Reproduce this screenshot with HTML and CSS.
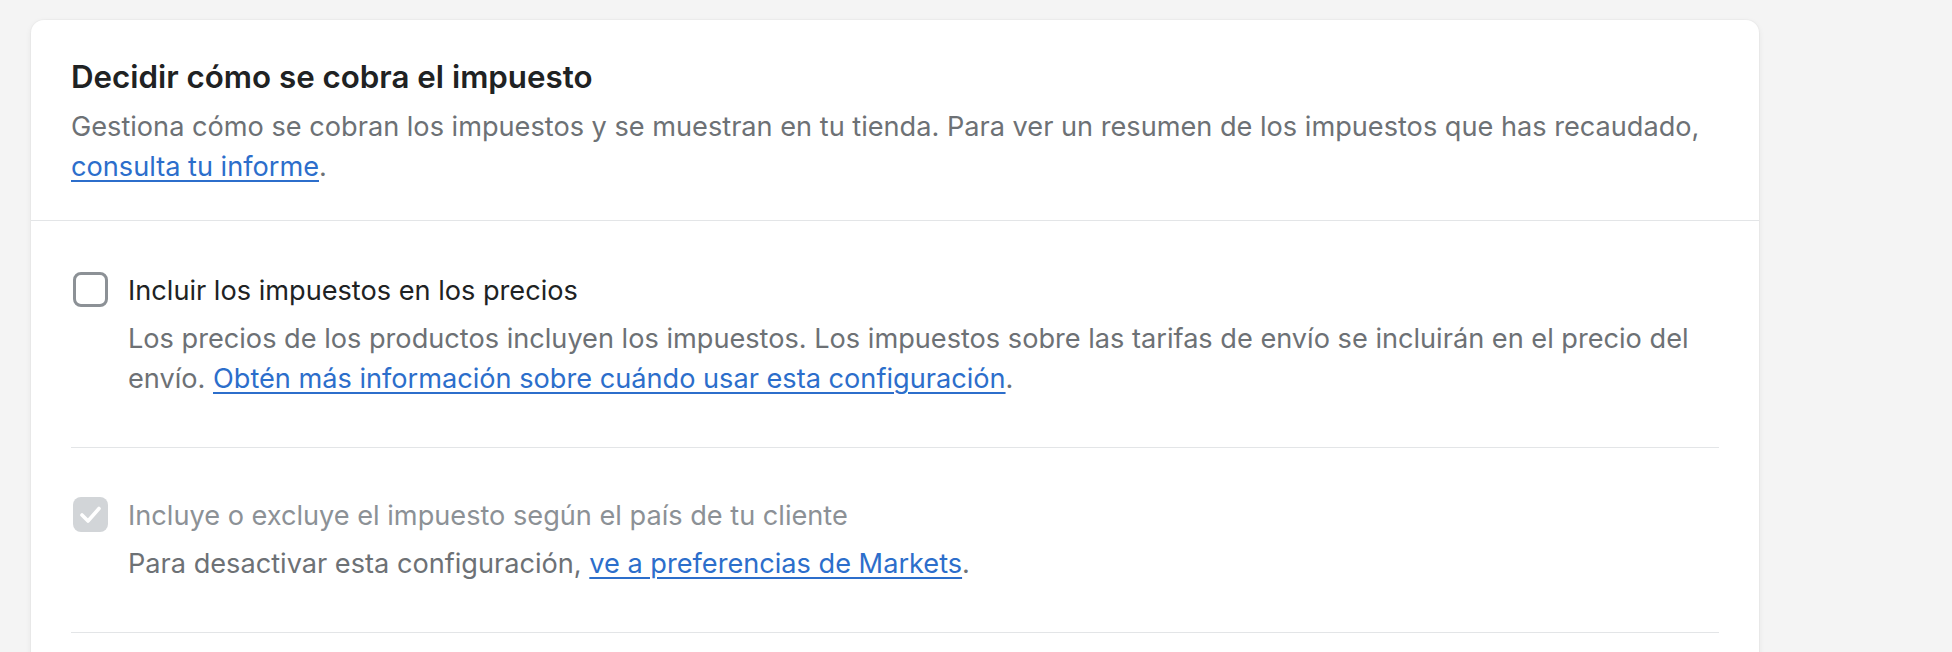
FILE: index.html
```html
<!DOCTYPE html>
<html lang="es">
<head>
    <meta charset="UTF-8">
    <meta name="viewport" content="width=device-width, initial-scale=1.0">
    <title>Impuestos</title>
    <link rel="stylesheet" href="styles.css">
</head>
<body>
    <div class="page">
        <div class="card">
            <div class="card-header">
                <h2>Decidir cómo se cobra el impuesto</h2>
                <p class="muted">Gestiona cómo se cobran los impuestos y se muestran en tu tienda. Para ver un resumen de los impuestos que has recaudado, <a href="#">consulta tu informe</a>.</p>
            </div>
            <div class="card-body">
                <div class="option">
                    <label class="option-row">
                        <span class="checkbox"></span>
                        <span class="option-label">Incluir los impuestos en los precios</span>
                    </label>
                    <p class="muted option-help">Los precios de los productos incluyen los impuestos. Los impuestos sobre las tarifas de envío se incluirán en el precio del envío. <a href="#">Obtén más información sobre cuándo usar esta configuración</a>.</p>
                </div>
                <div class="option">
                    <label class="option-row disabled">
                        <span class="checkbox checked">
                            <svg viewBox="0 0 35 35"><path d="M9 18l6 6 11-12.5" fill="none" stroke="#fff" stroke-width="3.6" stroke-linecap="round" stroke-linejoin="round"/></svg>
                        </span>
                        <span class="option-label">Incluye o excluye el impuesto según el país de tu cliente</span>
                    </label>
                    <p class="muted option-help">Para desactivar esta configuración, <a href="#">ve a preferencias de Markets</a>.</p>
                </div>
                <div class="option">
                    <p class="muted option-help">&nbsp;</p>
                </div>
            </div>
        </div>
    </div>
</body>
</html>
```

FILE: styles.css
```css
body {
    margin: 0;
    background-color: #f4f4f4;
    font-family: Inter, "Noto Sans", sans-serif;
    color: #202223;
    overflow: hidden;
}
.page {
    padding: 20px 193px 40px 31px;
}
.card {
    background-color: #fff;
    border-radius: 13px;
    box-shadow: 0 0 0 1px rgba(0, 0, 0, 0.02), 0 2px 6px rgba(0, 0, 0, 0.07);
}
.card-header {
    padding: 37px 40px 33px;
    border-bottom: 1px solid #e3e5e7;
}
h2 {
    margin: 0 0 10px;
    font-size: 31.3px;
    line-height: 40px;
    font-weight: 600;
    color: #202223;
}
p {
    margin: 0;
}
.muted {
    font-size: 27.15px;
    line-height: 40px;
    color: #6d7175;
}
a {
    color: #2c6ecb;
    text-decoration: underline;
    text-underline-offset: 4px;
    text-decoration-thickness: 2px;
}
.card-body {
    padding: 2px 40px 0;
}
.option {
    padding: 48px 0;
    border-bottom: 1px solid #e3e5e7;
}
.option-row {
    display: flex;
    align-items: flex-start;
    gap: 20px;
}
.checkbox {
    box-sizing: border-box;
    flex: none;
    width: 35px;
    height: 35px;
    margin: 1px 0 0 2px;
    border: 3px solid #8c9196;
    border-radius: 8px;
}
.checkbox.checked {
    border: none;
    background-color: #d2d5d8;
}
.checkbox svg {
    display: block;
    width: 35px;
    height: 35px;
}
.option-label {
    font-size: 27.15px;
    line-height: 40px;
}
.disabled .option-label {
    color: #8c9196;
}
.option-help {
    margin: 8px 0 0 57px;
}
```
